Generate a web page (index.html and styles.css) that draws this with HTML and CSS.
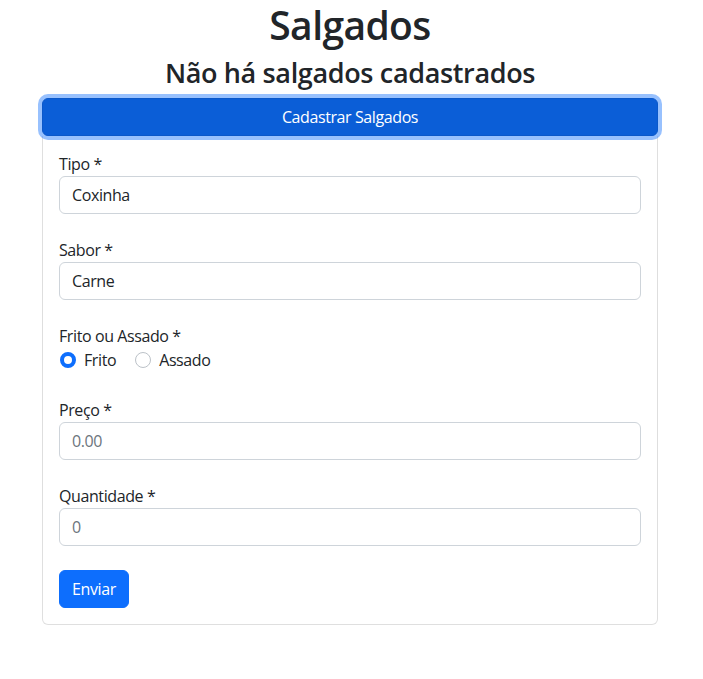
FILE: index.html
```html
<!DOCTYPE html>
<html lang="pt-BR">
<head>
<meta charset="utf-8">
<title>Salgados</title>
<link rel="stylesheet" href="styles.css">
</head>
<body>
<div class="page">
  <h1 class="title">Salgados</h1>
  <h3 class="subtitle">Não há salgados cadastrados</h3>
  <div class="panel">
    <button class="toggle" type="button">Cadastrar Salgados</button>
    <div class="card">
      <form class="card-body">
        <div class="group">
          <label class="label">Tipo *</label>
          <input class="input" type="text" value="Coxinha">
        </div>
        <div class="group">
          <label class="label">Sabor *</label>
          <input class="input" type="text" value="Carne">
        </div>
        <div class="group">
          <label class="label">Frito ou Assado *</label>
          <div class="radios">
            <label class="check"><span class="radio checked"></span>Frito</label>
            <label class="check"><span class="radio"></span>Assado</label>
          </div>
        </div>
        <div class="group">
          <label class="label">Preço *</label>
          <input class="input" type="text" placeholder="0.00">
        </div>
        <div class="group">
          <label class="label">Quantidade *</label>
          <input class="input" type="text" placeholder="0">
        </div>
        <button class="submit" type="button">Enviar</button>
      </form>
    </div>
  </div>
</div>
</body>
</html>
```
FILE: styles.css
```css
* { box-sizing: border-box; }
html, body { margin: 0; background: #fff; }
body {
  font-family: "Open Sans", "Noto Sans", sans-serif;
  font-size: 16px;
  line-height: 24px;
  color: #212529;
  letter-spacing: -0.4px;
}
.page { width: 700px; display: flex; flex-direction: column; align-items: center; }
.title {
  margin: 0 0 7px;
  padding-top: 1px;
  font-size: 39px;
  line-height: 48px;
  font-weight: 600;
  letter-spacing: -0.6px;
}
.subtitle {
  margin: 0 0 8px;
  font-size: 27px;
  line-height: 34px;
  font-weight: 600;
  letter-spacing: -0.35px;
}
.panel { width: 616px; display: flex; flex-direction: column; }
.toggle {
  display: block;
  width: 100%;
  height: 38px;
  padding: 6px 12px;
  font: inherit;
  letter-spacing: inherit;
  color: #fff;
  background: #0b5ed7;
  border: 1px solid #0a58ca;
  border-radius: 6px;
  box-shadow: 0 0 0 4px rgba(49, 132, 253, 0.5);
  position: relative;
  z-index: 1;
}
.card {
  border: 1px solid rgba(0, 0, 0, 0.125);
  border-top: 0;
  border-radius: 0 0 6px 6px;
}
.card-body { padding: 16px; display: flex; flex-direction: column; align-items: flex-start; }
.group { width: 100%; margin-bottom: 24px; display: flex; flex-direction: column; }
.label { display: block; }
.input {
  display: block;
  width: 100%;
  height: 38px;
  padding: 6px 12px;
  font: inherit;
  letter-spacing: inherit;
  color: #212529;
  background: #fff;
  border: 1px solid #ced4da;
  border-radius: 6px;
}
.input::placeholder { color: #6c757d; opacity: 1; }
.radios { display: flex; min-height: 24px; margin-bottom: 2px; padding-left: 1px; }
.check { display: flex; align-items: center; margin-right: 19px; }
.radio {
  width: 16px;
  height: 16px;
  border-radius: 50%;
  border: 1px solid #bcc2c8;
  background: #fff;
  margin-right: 8px;
  flex: none;
}
.radio.checked {
  border: 4px solid #0d6efd;
  background: #fff;
}
.submit {
  height: 38px;
  padding: 6px 12px;
  font: inherit;
  letter-spacing: inherit;
  color: #fff;
  background: #0d6efd;
  border: 1px solid #0d6efd;
  border-radius: 6px;
}
```
